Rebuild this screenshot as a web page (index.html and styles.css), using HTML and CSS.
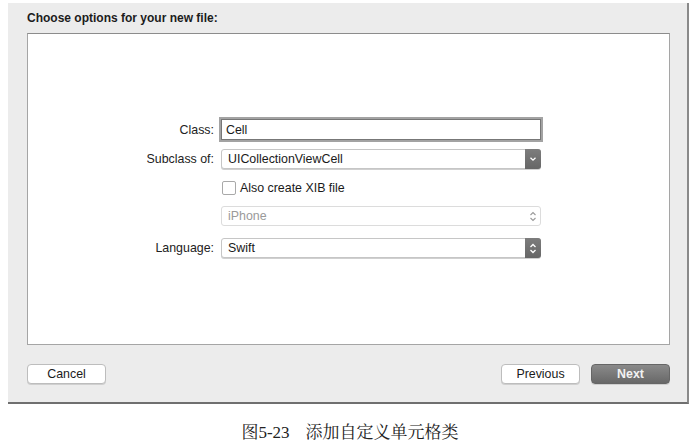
FILE: index.html
```html
<!DOCTYPE html>
<html>
<head>
<meta charset="utf-8">
<link rel="stylesheet" href="styles.css">
</head>
<body>
<div class="dialog">
  <div class="title">Choose options for your new file:</div>
  <div class="panel">
    <div class="form">
      <div class="label row-class">Class:</div>
      <div class="field focus row-class"><span class="text">Cell</span></div>

      <div class="label row-sub">Subclass of:</div>
      <div class="popup row-sub">
        <span class="text">UICollectionViewCell</span>
        <span class="arrow dark">
          <svg width="8" height="6" viewBox="0 0 8 6"><path d="M1.5 1.8 L4 4.2 L6.5 1.8" fill="none" stroke="#fff" stroke-width="1.3"/></svg>
        </span>
      </div>

      <div class="label row-check"></div>
      <div class="check row-check"><span class="box"></span><span class="text">Also create XIB file</span></div>

      <div class="label row-dev"></div>
      <div class="popup disabled row-dev">
        <span class="text">iPhone</span>
        <span class="arrow light">
          <svg width="8" height="11" viewBox="0 0 8 11"><path d="M1.5 4 L4 1.5 L6.5 4 M1.5 7 L4 9.5 L6.5 7" fill="none" stroke="#9a9a9a" stroke-width="1.1"/></svg>
        </span>
      </div>

      <div class="label row-lang">Language:</div>
      <div class="popup row-lang">
        <span class="text">Swift</span>
        <span class="arrow dark">
          <svg width="8" height="11" viewBox="0 0 8 11"><path d="M1.5 4 L4 1.5 L6.5 4 M1.5 7 L4 9.5 L6.5 7" fill="none" stroke="#fff" stroke-width="1.3"/></svg>
        </span>
      </div>
    </div>
  </div>
  <div class="buttons">
    <button class="btn">Cancel</button>
    <div class="spacer"></div>
    <button class="btn">Previous</button>
    <button class="btn primary">Next</button>
  </div>
</div>
<div class="caption">图5-23<span class="gap"></span>添加自定义单元格类</div>
</body>
</html>
```
FILE: styles.css
```css
html, body {
  margin: 0;
  padding: 0;
  background: #ffffff;
}
body {
  width: 700px;
  height: 448px;
  overflow: hidden;
  font-family: "Liberation Sans", Arial, sans-serif;
  color: #1a1a1a;
}
.dialog {
  margin: 3px 0 0 8px;
  width: 681px;
  height: 401px;
  box-sizing: border-box;
  background: #ececec;
  border-right: 2px solid #8a8a8a;
  border-bottom: 2px solid #6f6f6f;
  display: flex;
  flex-direction: column;
}
.title {
  height: 30px;
  padding-left: 19px;
  font-size: 12px;
  font-weight: bold;
  line-height: 30px;
  color: #1c1c1c;
}
.panel {
  margin-left: 19px;
  width: 643px;
  height: 312px;
  box-sizing: border-box;
  background: #fff;
  border: 1px solid #a5a5a5;
  border-top-color: #8c8c8c;
  padding-top: 85px;
}
.form {
  display: grid;
  grid-template-columns: 186px 320px;
  column-gap: 7px;
  font-size: 12.4px;
}
.label {
  text-align: right;
  display: flex;
  align-items: center;
  justify-content: flex-end;
  color: #222;
}
.text { white-space: nowrap; }
.field {
  height: 21px;
  box-sizing: border-box;
  background: #fff;
  border: 1px solid #9b9b9b;
  display: flex;
  align-items: center;
  padding-left: 4px;
}
.field.focus {
  box-shadow: 0 0 0 2px #a3a3a3;
  border-color: #777;
}
.popup {
  height: 20px;
  box-sizing: border-box;
  background: #fff;
  border: 1px solid #c6c6c6;
  border-radius: 3px;
  display: flex;
  align-items: center;
  padding-left: 6px;
  box-shadow: 0 1px 0 #d0d0d0;
}
.popup .text { flex: 1; }
.arrow {
  width: 16px;
  align-self: stretch;
  display: flex;
  align-items: center;
  justify-content: center;
  border-radius: 0 3px 3px 0;
  margin: -1px -1px -1px 0;
}
.arrow.dark {
  background: linear-gradient(#7d7d7d, #666666);
}
.arrow.light {
  background: transparent;
}
.popup.disabled {
  color: #9a9a9a;
  border-color: #dcdcdc;
  box-shadow: none;
}
.check {
  display: flex;
  align-items: center;
  height: 16px;
}
.box {
  width: 12px;
  height: 12px;
  border: 1px solid #a9a9a9;
  border-radius: 2px;
  background: #fff;
  margin: 0 4px 0 1px;
}
.row-class { margin-top: 0; height: 21px; }
.row-sub { margin-top: 9px; }
.row-check { margin-top: 11px; }
.row-dev { margin-top: 10px; }
.row-lang { margin-top: 12px; }
.buttons {
  display: flex;
  align-items: center;
  padding: 19px 0 0 19px;
  width: 643px;
  gap: 11px;
}
.spacer { flex: 1; }
.btn {
  width: 79px;
  height: 20px;
  box-sizing: border-box;
  font-family: "Liberation Sans", Arial, sans-serif;
  font-size: 12.4px;
  color: #1a1a1a;
  background: #fff;
  border: 1px solid #bdbdbd;
  border-radius: 4px;
  box-shadow: 0 1px 0 #cfcfcf;
  padding: 0;
}
.btn.primary {
  color: #f2f2f2;
  font-weight: bold;
  background: linear-gradient(#8a8a8a, #686868);
  border-color: #666;
}
.caption {
  margin-top: 20px;
  text-align: center;
  font-family: "Liberation Serif", "Noto Serif CJK SC", "Noto Sans CJK SC", serif;
  font-size: 17px;
  color: #222;
  line-height: 18px;
}
.gap { display: inline-block; width: 16px; }
```
